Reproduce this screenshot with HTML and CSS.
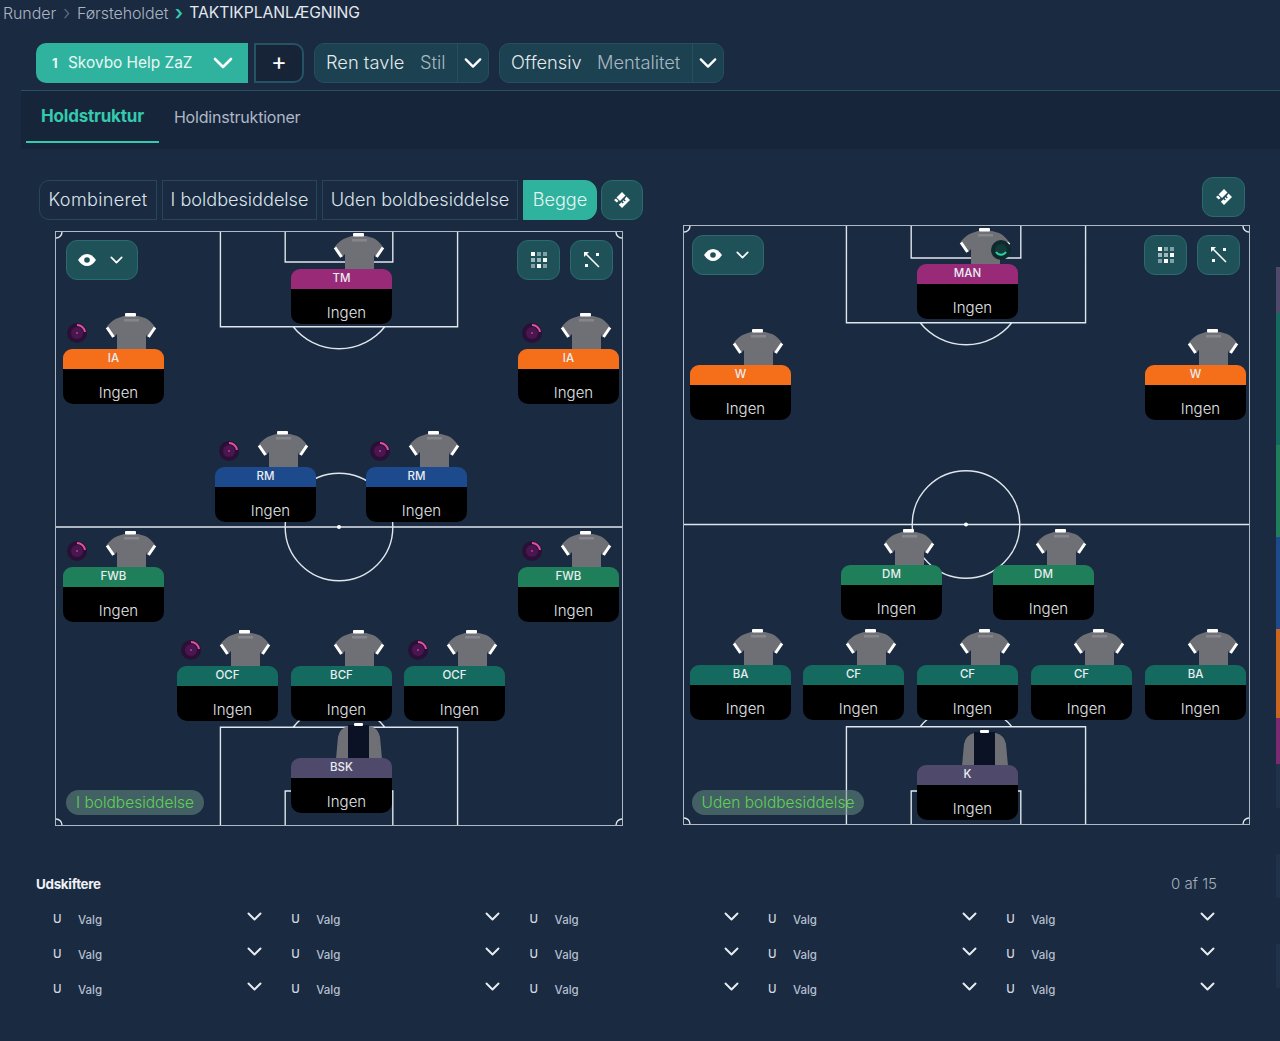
FILE: index.html
```html
<!DOCTYPE html>
<html lang="da">
<head>
<meta charset="utf-8">
<title>Taktikplanlægning</title>
<link rel="stylesheet" href="styles.css">
</head>
<body>
<svg class="defs" width="0" height="0" aria-hidden="true">
  <symbol id="shirt" viewBox="0 0 52 36">
    <path fill="#6f7076" d="M19 3H33L40 5Q45 7 50 14L42 24L41 21V36H12V21L9 24L1.500 14Q7 7 13 5Z"/>
    <rect x="19" y="6" width="15" height="2.500" fill="#85868c"/>
    <rect x="20" y="0" width="11" height="3.500" rx="1" fill="#fff"/>
    <path d="M2 14.500L8.500 24M50 14.500L43.500 24" stroke="#fff" stroke-width="3"/>
  </symbol>
  <symbol id="keeper" viewBox="0 0 46 36">
    <path fill="#6f7076" d="M12 3H34Q42 5 44 14L46 36H0L2 14Q4 5 12 3Z"/>
    <rect x="12" y="2" width="21" height="34" fill="#0b1226"/>
    <rect x="18" y="0" width="9" height="3" rx="1" fill="#fff"/>
  </symbol>
  <symbol id="chev" viewBox="0 0 20 12">
    <path d="M2 2L10 10L18 2" fill="none" stroke="currentColor" stroke-width="2.600" stroke-linecap="round" stroke-linejoin="round"/>
  </symbol>
  <symbol id="swap" viewBox="0 0 18 18">
    <path fill="#fff" d="M9 1L12.500 4.500L7 10L3.500 6.500ZM3 7.500L5.500 10L3.800 11.500L1 9ZM13.500 5.500L17 9L9 17L5.800 13.800L8.500 11.200L9.800 12.500L10.800 11.500L9.500 10.200L10.500 9.200L11.800 10.500L12.800 9.500L11.500 8.200Z"/>
  </symbol>
  <symbol id="dots" viewBox="0 0 16 16">
    <rect x="0" y="0" width="4" height="4" fill="#fff"/><rect x="6" y="0" width="4" height="4" fill="#7fa0a8"/><rect x="12" y="0" width="4" height="4" fill="#7fa0a8"/>
    <rect x="0" y="6" width="4" height="4" fill="#9fb8bd"/><rect x="6" y="6" width="4" height="4" fill="#9fb8bd"/><rect x="12" y="6" width="4" height="4" fill="#fff"/>
    <rect x="0" y="12" width="4" height="4" fill="#7fa0a8"/><rect x="6" y="12" width="4" height="4" fill="#fff"/><rect x="12" y="12" width="4" height="4" fill="#7fa0a8"/>
  </symbol>
  <symbol id="spread" viewBox="0 0 16 16">
    <path d="M1 1L15 15" stroke="#fff" stroke-width="1.500"/>
    <path d="M0 0H5L0 5Z" fill="#fff"/>
    <rect x="12" y="1" width="3" height="3" fill="#fff"/><rect x="1" y="12" width="3" height="3" fill="#fff"/>
  </symbol>
  <symbol id="eye" viewBox="0 0 18 12">
    <path fill="#fff" d="M0 6Q4 0 9 0T18 6Q14 12 9 12T0 6Z"/><circle cx="9" cy="6" r="2.800" fill="#1f5159"/>
  </symbol>
  <symbol id="ball" viewBox="0 0 20 20">
    <circle cx="10" cy="10" r="10" fill="#2a1036"/><circle cx="10" cy="10" r="6" fill="#4a1650"/>
    <path d="M10 2A8 8 0 0 1 18 9" fill="none" stroke="#e0529c" stroke-width="2"/><circle cx="10" cy="10" r="1" fill="#c43a8a"/>
  </symbol>
  <symbol id="ball-green" viewBox="0 0 20 20">
    <circle cx="10" cy="10" r="10" fill="#0e2a2c"/><circle cx="10" cy="10" r="6" fill="#123a38"/>
    <path d="M5 12A6 6 0 0 0 15 12" fill="none" stroke="#2fd3a5" stroke-width="2"/>
  </symbol>
</svg>

<nav class="crumbs">
  <span>Runder</span><span class="sep dim">›</span><span>Førsteholdet</span><span class="sep teal">›</span><span class="now">TAKTIKPLANLÆGNING</span>
</nav>

<div class="toolbar">
  <div class="team"><b>1</b><span class="team-name">Skovbo Help ZaZ</span><svg class="chev-l"><use href="#chev"/></svg></div>
  <div class="plus">+</div>
  <div class="combo combo-a"><span>Ren tavle</span><span class="muted">Stil</span><i class="split"></i><svg class="chev-m"><use href="#chev"/></svg></div>
  <div class="combo combo-b"><span>Offensiv</span><span class="muted">Mentalitet</span><i class="split"></i><svg class="chev-m"><use href="#chev"/></svg></div>
</div>

<div class="tabs">
  <div class="tab active">Holdstruktur</div>
  <div class="tab">Holdinstruktioner</div>
</div>

<main class="boards">
  <section class="col-left">
    <div class="modes">
      <div class="mode first">Kombineret</div>
      <div class="mode">I boldbesiddelse</div>
      <div class="mode">Uden boldbesiddelse</div>
      <div class="mode on">Begge</div>
      <div class="icon-btn mode-icon"><svg class="ico"><use href="#swap"/></svg></div>
    </div>
    <div class="pitch pitch-l">
      <svg class="lines" viewBox="0 0 568 595">
        <g fill="none" stroke="#dfe6ee" stroke-width="1.400">
          <path d="M165 0V95H403V0M230 0V30H338V0M238 95A59 59 0 0 0 330 95"/>
          <path d="M0 296H568"/><circle cx="284" cy="296" r="54"/>
          <path d="M165 595V497H403V595M230 595V561H338V595M238 497A59 59 0 0 1 330 497"/>
          <path d="M0 6A6 6 0 0 0 6 0M562 0A6 6 0 0 0 568 6M0 589A6 6 0 0 1 6 595M562 595A6 6 0 0 1 568 589"/>
        </g>
        <circle cx="284" cy="296" r="2" fill="#fff"/>
      </svg>
      <div class="pitch-tools">
        <div class="icon-btn eye-btn"><svg class="ico-eye"><use href="#eye"/></svg><svg class="ico-chev"><use href="#chev"/></svg></div>
        <div class="icon-btn tool tool-first"><svg class="ico-s"><use href="#dots"/></svg></div>
        <div class="icon-btn tool"><svg class="ico-s"><use href="#spread"/></svg></div>
      </div>

      <div class="player" style="left:236px;top:38px"><svg class="shirt"><use href="#shirt"/></svg><div class="pos magenta">TM</div><div class="name">Ingen</div></div>
      <div class="player" style="left:8px;top:118px"><svg class="ball"><use href="#ball"/></svg><svg class="shirt"><use href="#shirt"/></svg><div class="pos orange">IA</div><div class="name">Ingen</div></div>
      <div class="player" style="left:463px;top:118px"><svg class="ball"><use href="#ball"/></svg><svg class="shirt"><use href="#shirt"/></svg><div class="pos orange">IA</div><div class="name">Ingen</div></div>
      <div class="player" style="left:160px;top:236px"><svg class="ball"><use href="#ball"/></svg><svg class="shirt"><use href="#shirt"/></svg><div class="pos blue">RM</div><div class="name">Ingen</div></div>
      <div class="player" style="left:311px;top:236px"><svg class="ball"><use href="#ball"/></svg><svg class="shirt"><use href="#shirt"/></svg><div class="pos blue">RM</div><div class="name">Ingen</div></div>
      <div class="player" style="left:8px;top:336px"><svg class="ball"><use href="#ball"/></svg><svg class="shirt"><use href="#shirt"/></svg><div class="pos green">FWB</div><div class="name">Ingen</div></div>
      <div class="player" style="left:463px;top:336px"><svg class="ball"><use href="#ball"/></svg><svg class="shirt"><use href="#shirt"/></svg><div class="pos green">FWB</div><div class="name">Ingen</div></div>
      <div class="player" style="left:122px;top:435px"><svg class="ball"><use href="#ball"/></svg><svg class="shirt"><use href="#shirt"/></svg><div class="pos teal-pos">OCF</div><div class="name">Ingen</div></div>
      <div class="player" style="left:236px;top:435px"><svg class="shirt"><use href="#shirt"/></svg><div class="pos teal-pos">BCF</div><div class="name">Ingen</div></div>
      <div class="player" style="left:349px;top:435px"><svg class="ball"><use href="#ball"/></svg><svg class="shirt"><use href="#shirt"/></svg><div class="pos teal-pos">OCF</div><div class="name">Ingen</div></div>
      <div class="player" style="left:236px;top:527px"><svg class="gk"><use href="#keeper"/></svg><div class="pos slate">BSK</div><div class="name">Ingen</div></div>

      <div class="phase">I boldbesiddelse</div>
    </div>
  </section>

  <section class="col-right">
    <div class="icon-btn swap-btn"><svg class="ico"><use href="#swap"/></svg></div>
    <div class="pitch pitch-r">
      <svg class="lines" viewBox="0 0 567 600">
        <g fill="none" stroke="#dfe6ee" stroke-width="1.400">
          <path d="M163 0V97H403V0M228 0V32H338V0M237 97A59 59 0 0 0 329 97"/>
          <path d="M0 299.500H567"/><circle cx="283" cy="299.500" r="54"/>
          <path d="M163 600V502.500H403V600M228 600V567H338V600M237 502.500A59 59 0 0 1 329 502.500"/>
          <path d="M0 6A6 6 0 0 0 6 0M561 0A6 6 0 0 0 567 6M0 594A6 6 0 0 1 6 600M561 600A6 6 0 0 1 567 594"/>
        </g>
        <circle cx="283" cy="299.500" r="2" fill="#fff"/>
      </svg>
      <div class="pitch-tools">
        <div class="icon-btn eye-btn"><svg class="ico-eye"><use href="#eye"/></svg><svg class="ico-chev"><use href="#chev"/></svg></div>
        <div class="icon-btn tool tool-first"><svg class="ico-s"><use href="#dots"/></svg></div>
        <div class="icon-btn tool"><svg class="ico-s"><use href="#spread"/></svg></div>
      </div>

      <div class="player" style="left:234px;top:39px"><svg class="shirt"><use href="#shirt"/></svg><svg class="ball ball-top"><use href="#ball-green"/></svg><div class="pos magenta">MAN</div><div class="name">Ingen</div></div>
      <div class="player" style="left:7px;top:140px"><svg class="shirt"><use href="#shirt"/></svg><div class="pos orange">W</div><div class="name">Ingen</div></div>
      <div class="player" style="left:462px;top:140px"><svg class="shirt"><use href="#shirt"/></svg><div class="pos orange">W</div><div class="name">Ingen</div></div>
      <div class="player" style="left:158px;top:340px"><svg class="shirt"><use href="#shirt"/></svg><div class="pos green">DM</div><div class="name">Ingen</div></div>
      <div class="player" style="left:310px;top:340px"><svg class="shirt"><use href="#shirt"/></svg><div class="pos green">DM</div><div class="name">Ingen</div></div>
      <div class="player" style="left:7px;top:440px"><svg class="shirt"><use href="#shirt"/></svg><div class="pos teal-pos">BA</div><div class="name">Ingen</div></div>
      <div class="player" style="left:120px;top:440px"><svg class="shirt"><use href="#shirt"/></svg><div class="pos teal-pos">CF</div><div class="name">Ingen</div></div>
      <div class="player" style="left:234px;top:440px"><svg class="shirt"><use href="#shirt"/></svg><div class="pos teal-pos">CF</div><div class="name">Ingen</div></div>
      <div class="player" style="left:348px;top:440px"><svg class="shirt"><use href="#shirt"/></svg><div class="pos teal-pos">CF</div><div class="name">Ingen</div></div>
      <div class="player" style="left:462px;top:440px"><svg class="shirt"><use href="#shirt"/></svg><div class="pos teal-pos">BA</div><div class="name">Ingen</div></div>
      <div class="player" style="left:234px;top:540px"><svg class="gk"><use href="#keeper"/></svg><div class="pos slate">K</div><div class="name">Ingen</div></div>

      <div class="phase phase-r">Uden boldbesiddelse</div>
    </div>
  </section>
</main>

<section class="subs">
  <div class="subs-head"><h2>Udskiftere</h2><span>0 af 15</span></div>
  <div class="subs-grid">
    <div class="sub"><span class="u">U</span><span class="v">Valg</span><svg class="chev-s"><use href="#chev"/></svg></div>
    <div class="sub"><span class="u">U</span><span class="v">Valg</span><svg class="chev-s"><use href="#chev"/></svg></div>
    <div class="sub"><span class="u">U</span><span class="v">Valg</span><svg class="chev-s"><use href="#chev"/></svg></div>
    <div class="sub"><span class="u">U</span><span class="v">Valg</span><svg class="chev-s"><use href="#chev"/></svg></div>
    <div class="sub"><span class="u">U</span><span class="v">Valg</span><svg class="chev-s"><use href="#chev"/></svg></div>
    <div class="sub"><span class="u">U</span><span class="v">Valg</span><svg class="chev-s"><use href="#chev"/></svg></div>
    <div class="sub"><span class="u">U</span><span class="v">Valg</span><svg class="chev-s"><use href="#chev"/></svg></div>
    <div class="sub"><span class="u">U</span><span class="v">Valg</span><svg class="chev-s"><use href="#chev"/></svg></div>
    <div class="sub"><span class="u">U</span><span class="v">Valg</span><svg class="chev-s"><use href="#chev"/></svg></div>
    <div class="sub"><span class="u">U</span><span class="v">Valg</span><svg class="chev-s"><use href="#chev"/></svg></div>
    <div class="sub"><span class="u">U</span><span class="v">Valg</span><svg class="chev-s"><use href="#chev"/></svg></div>
    <div class="sub"><span class="u">U</span><span class="v">Valg</span><svg class="chev-s"><use href="#chev"/></svg></div>
    <div class="sub"><span class="u">U</span><span class="v">Valg</span><svg class="chev-s"><use href="#chev"/></svg></div>
    <div class="sub"><span class="u">U</span><span class="v">Valg</span><svg class="chev-s"><use href="#chev"/></svg></div>
    <div class="sub"><span class="u">U</span><span class="v">Valg</span><svg class="chev-s"><use href="#chev"/></svg></div>
  </div>
</section>

<aside class="strip">
  <i class="s1"></i><i class="s2"></i><i class="s3"></i><i class="s4"></i><i class="s5"></i><i class="s6"></i><i class="s7"></i><i class="s7 gap"></i><i class="s7 gap"></i>
</aside>
</body>
</html>
```

FILE: styles.css
```css
* { box-sizing: border-box; }
html, body { margin: 0; height: 1041px; overflow: hidden; }
body {
  position: relative;
  background: #1a2a40;
  color: #dfe5ec;
  font-family: Inter, "Liberation Sans", sans-serif;
  font-weight: 300;
}
.defs { position: absolute; }

/* breadcrumb */
.crumbs {
  display: flex;
  align-items: center;
  height: 27px;
  padding: 0 0 2px 3px;
  font-size: 16px;
  color: #aab4c2;
  letter-spacing: -0.1px;
}
.sep { width: 21px; text-align: center; font-size: 20px; line-height: 20px; }
.sep.dim { color: #5f6f82; }
.sep.teal { color: #35c7ac; font-weight: 600; }
.now { color: #e3e8ee; font-weight: 400; font-size: 15.700px; }

/* toolbar */
.toolbar {
  display: flex;
  height: 40px;
  margin: 16px 0 0 36px;
  font-size: 18.300px;
}
.team {
  display: flex;
  align-items: center;
  width: 212px;
  padding: 0 0 1px 16px;
  background: #2fb39f;
  border-radius: 10px 0 0 10px;
  color: #e9f7f4;
  font-size: 15.400px;
  font-weight: 400;
}
.team b { width: 16px; font-size: 13px; font-weight: 700; }
.team-name { width: 145px; white-space: nowrap; }
.chev-l { width: 20px; height: 12px; color: #fff; }
.plus {
  width: 50px;
  margin-left: 6px;
  padding-bottom: 3px;
  display: flex;
  align-items: center;
  justify-content: center;
  background: #172438;
  border: 2px solid #245462;
  border-radius: 0 10px 10px 0;
  color: #fff;
  font-size: 24px;
  font-weight: 400;
}
.combo {
  display: flex;
  align-items: center;
  margin-left: 10px;
  padding-left: 11px;
  background: #1c4150;
  border: 1.500px solid #264f5e;
  border-radius: 10px;
  color: #e3e9ec;
  white-space: nowrap;
}
.combo span { padding-bottom: 2px; }
.combo-a { width: 175px; }
.combo-b { width: 225px; }
.combo-a span:first-child { width: 94px; }
.combo-a .muted { width: 37px; }
.combo-b span:first-child { width: 86px; }
.combo-b .muted { width: 95px; }
.muted { color: #a9b7c0; }
.split { width: 1px; height: 38px; background: #27505f; margin-right: 6px; }
.chev-m { width: 18px; height: 12px; color: #fff; }

/* tabs */
.tabs {
  display: flex;
  height: 59px;
  margin: 7px 0 0 21px;
  padding-left: 5px;
  background: #17253a;
  border-top: 1px solid #25505e;
}
.tab {
  display: flex;
  align-items: center;
  height: 52px;
  padding: 0 15px;
  font-size: 16px;
  font-weight: 400;
  color: #aeb8c6;
  letter-spacing: -0.2px;
}
.tab.active {
  color: #35c9ae;
  font-weight: 700;
  font-size: 17px;
  border-bottom: 2.500px solid #35c9ae;
}

/* boards */
.boards { display: flex; margin-top: 28px; padding-left: 39px; }
.col-left { width: 644px; padding-top: 3px; }
.col-right { width: 567px; display: flex; flex-direction: column; }

.modes { display: flex; height: 40px; gap: 5px; font-size: 18.100px; }
.mode {
  display: flex;
  align-items: center;
  justify-content: center;
  padding: 0 4px 2px;
  border: 1.500px solid #24485a;
  color: #dce4ea;
  white-space: nowrap;
}
.mode.first { width: 118px; border-radius: 10px 0 0 10px; letter-spacing: 0.3px; }
.mode:nth-child(2) { width: 155px; }
.mode:nth-child(3) { width: 196px; }
.mode.on {
  width: 74px;
  background: #2fb39f;
  border-color: #2fb39f;
  border-radius: 0 12px 12px 0;
  color: #e7f5f3;
}
.icon-btn {
  display: flex;
  align-items: center;
  justify-content: center;
  background: #1f5159;
  border: 1.500px solid #2a6a70;
  border-radius: 11px;
  height: 40px;
}
.mode-icon { width: 42px; margin-left: -1px; }
.swap-btn { width: 43px; align-self: flex-end; margin-right: 5px; }
.ico { width: 18px; height: 18px; }

.pitch { position: relative; }
.pitch-l { width: 568px; height: 595px; margin: 11px 0 0 16px; }
.pitch-r { width: 567px; height: 600px; margin-top: 8px; }
.lines {
  position: absolute;
  inset: 0;
  width: 100%;
  height: 100%;
  border: 1px solid #aeb8c6;
  overflow: visible;
}
.pitch-tools {
  position: absolute;
  top: 9px;
  left: 11px;
  right: 10px;
  display: flex;
}
.pitch-r .pitch-tools { top: 10px; left: 9px; }
.eye-btn { width: 72px; gap: 14px; padding-right: 3px; margin-right: auto; }
.tool { width: 43px; }
.tool-first { margin-right: 10px; }
.ico-eye { width: 18px; height: 12px; }
.ico-chev { width: 13px; height: 8px; color: #fff; }
.ico-s { width: 16px; height: 16px; }

/* players */
.player { position: absolute; width: 101px; }
.shirt { position: absolute; top: -36px; left: 42px; width: 52px; height: 36px; }
.gk { position: absolute; top: -35px; left: 45px; width: 46px; height: 36px; }
.ball { position: absolute; top: -26px; left: 4px; width: 20px; height: 20px; }
.ball-top { left: 74px; top: -24px; }
.pos {
  position: relative;
  height: 20px;
  border-radius: 9px 9px 0 0;
  text-align: center;
  font-size: 11.500px;
  line-height: 19px;
  font-weight: 500;
  color: #e9edf1;
}
.name {
  position: relative;
  height: 35px;
  padding: 14px 0 0 10px;
  background: #000;
  border-radius: 0 0 10px 10px;
  text-align: center;
  font-size: 15px;
  line-height: 20px;
  color: #e2e5e9;
}
.magenta { background: #982a78; }
.orange { background: #f56f1b; }
.blue { background: #1d4a8c; }
.green { background: #1f7f5a; }
.teal-pos { background: #146a5f; }
.slate { background: #4f4a6b; }

.phase {
  position: absolute;
  left: 11px;
  bottom: 11px;
  height: 25px;
  width: 138px;
  border-radius: 13px;
  background: rgba(102, 142, 132, 0.55);
  color: #5fd055;
  font-size: 15.500px;
  line-height: 25px;
  text-align: center;
  white-space: nowrap;
}
.phase-r { left: 9px; bottom: 10px; width: 172px; }

/* substitutes */
.subs { margin-top: 48px; padding-left: 36px; }
.subs-head {
  display: flex;
  justify-content: space-between;
  align-items: center;
  width: 1181px;
  height: 20px;
}
.subs-head h2 { margin: 0; font-size: 13.400px; font-weight: 700; color: #eef1f4; letter-spacing: -0.3px; }
.subs-head span { font-size: 15px; color: #a5afbd; margin-top: -2px; }
.subs-grid {
  display: grid;
  grid-template-columns: repeat(5, 238.300px);
  grid-auto-rows: 35px;
  margin: 10px 0 0 17px;
}
.sub { display: flex; align-items: center; font-size: 11.500px; font-weight: 500; color: #b4bfcf; height: 30px; }
.u { width: 25px; color: #d2d8e2; }
.v { width: 144px; padding-top: 1px; }
.chev-s { width: 15px; height: 9px; color: #e8ecf0; margin: -5px 0 0 25px; }

/* right edge strip */
.strip {
  position: absolute;
  right: 0;
  top: 267px;
  width: 4px;
  display: flex;
  flex-direction: column;
}
.strip i { display: block; }
.s1 { height: 46px; background: #4f4a6b; }
.s2 { height: 132px; background: #146a5f; }
.s3 { height: 92px; background: #1f7f5a; }
.s4 { height: 92px; background: #1d4a8c; }
.s5 { height: 89px; background: #c9651f; }
.s6 { height: 46px; background: #7a2a70; }
.s7 { height: 44px; background: #20324a; }
.s7.gap { margin-top: 46px; }
```
